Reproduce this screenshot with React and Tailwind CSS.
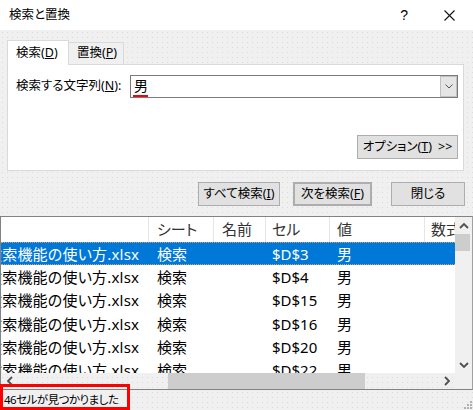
import React from 'react';

const font = "font-['Segoe_UI','Noto_Sans','Noto_Sans_CJK_JP',sans-serif] [font-feature-settings:'palt']";

const rows = [
  { cell: '$D$3', selected: true },
  { cell: '$D$4' },
  { cell: '$D$15' },
  { cell: '$D$16' },
  { cell: '$D$20' },
  { cell: '$D$22' },
];

const grid = 'grid grid-cols-[147px_65px_52px_64px_95px_1fr]';

const Chevron = ({ dir, className }) => {
  const pts = {
    up: '1,6 5,2 9,6',
    down: '1,2 5,6 9,2',
    left: '6,1 2,5 6,9',
    right: '2,1 6,5 2,9',
  }[dir];
  const vertical = dir === 'up' || dir === 'down';
  return (
    <svg
      className={className}
      width={vertical ? 10 : 8}
      height={vertical ? 8 : 10}
      viewBox={vertical ? '0 0 10 8' : '0 0 8 10'}
      fill="none"
      stroke="#505050"
      strokeWidth="1.8"
    >
      <polyline points={pts} />
    </svg>
  );
};

const Button = ({ children, className = '' }) => (
  <div className={`h-[24px] flex items-center justify-center bg-[#e1e1e1] border border-[#adadad] text-[12.5px] ${className}`}>
    {children}
  </div>
);

const App = () => {
  return (
    <div
      className={`relative w-[473px] h-[410px] overflow-hidden bg-[#f0f0f0] bg-[radial-gradient(circle,#dcdcdc_0.6px,transparent_0.9px)] bg-[length:5px_5px] text-black flex flex-col ${font}`}
    >
      {/* title bar */}
      <div className="h-[30px] shrink-0 bg-white flex items-center pl-[9px] text-[12.5px]">
        <span>検索と置換</span>
        <span className="ml-auto mr-[36px] text-[14px] font-['Liberation_Sans',sans-serif]">?</span>
        <svg className="mr-[18px]" width="11" height="11" viewBox="0 0 11 11" stroke="#111" strokeWidth="1.1">
          <line x1="0.5" y1="0.5" x2="10.5" y2="10.5" />
          <line x1="10.5" y1="0.5" x2="0.5" y2="10.5" />
        </svg>
      </div>

      {/* find panel */}
      <div className="px-[7px] pt-[9px] shrink-0">
        <div className="flex items-end h-[25px] text-[12.5px]">
          <div className="relative z-10 w-[62px] h-[25px] -mb-px bg-white border border-b-0 border-[#d9d9d9] pl-[8px] pt-[3px]">
            検索(<span className="underline">D</span>)
          </div>
          <div className="w-[55px] h-[22px] bg-[#f0f0f0] border border-l-0 border-b-0 border-[#d9d9d9] pl-[8px] pt-[1px]">
            置換(<span className="underline">P</span>)
          </div>
        </div>
        <div className="w-[457px] h-[107px] bg-white border border-[#d9d9d9] pt-[10px] pr-[5px] flex flex-col">
          <div className="flex items-center">
            <span className="pl-[8px] text-[12.5px]">
              検索する文字列(<span className="underline">N</span>):
            </span>
            <div className="ml-auto w-[328px] h-[23px] border border-[#7a7a7a] flex items-stretch">
              <div className="flex-1 pl-[3px] flex flex-col">
                <span className="text-[14px] leading-[19px]">男</span>
                <div className="w-[15px] h-[2px] bg-[#ff0000] -ml-[1px]" />
              </div>
              <div className="w-[17px] bg-[#e5e5e5] border border-[#c0c0c0] flex items-center justify-center">
                <svg width="8" height="5" viewBox="0 0 8 5" fill="none" stroke="#555" strokeWidth="1">
                  <polyline points="0.5,0.5 4,4 7.5,0.5" />
                </svg>
              </div>
            </div>
          </div>
          <div className="flex justify-end mt-[37px]">
            <Button className="w-[101px] gap-[6px]">
              <span>オプション(<span className="underline">T</span>)</span>
              <span>&gt;&gt;</span>
            </Button>
          </div>
        </div>
        <div className="flex mt-[11px]">
          <Button className="w-[82px] ml-[191px]">
            すべて検索(<span className="underline">I</span>)
          </Button>
          <Button className="w-[79px] ml-[13px] border-2 border-[#0078d7]">
            次を検索(<span className="underline">F</span>)
          </Button>
          <Button className="w-[74px] ml-[19px]">閉じる</Button>
        </div>
      </div>

      {/* result list */}
      <div className="mt-[10px] h-[174px] shrink-0 border border-[#828282] border-r-[#a0a0a0] flex flex-col">
        <div className="flex h-[156px] bg-white">
          <div className="flex-1 overflow-hidden text-[15px]">
            <div className={`${grid} h-[25px] text-[#333]`}>
              <div />
              <div className="border-l border-[#e5e5e5] pl-[8px] flex items-center">シート</div>
              <div className="border-l border-[#e5e5e5] pl-[8px] flex items-center">名前</div>
              <div className="border-l border-[#e5e5e5] pl-[6px] flex items-center">セル</div>
              <div className="border-l border-[#e5e5e5] pl-[7px] flex items-center">値</div>
              <div className="border-l border-[#e5e5e5] pl-[6px] flex items-center whitespace-nowrap overflow-hidden">数式</div>
            </div>
            {rows.map((r) => (
              <div
                key={r.cell}
                className={`${grid} h-[23.4px] items-center ${
                  r.selected ? 'bg-[#0078d7] text-white border-y border-dotted border-[#d9a066]' : ''
                }`}
              >
                <div className="overflow-hidden whitespace-nowrap">
                  <span className="block -ml-[14px] tracking-[0.2px]">検索機能の使い方.xlsx</span>
                </div>
                <div className="pl-[9px]">検索</div>
                <div />
                <div className="pl-[7px]">{r.cell}</div>
                <div className="pl-[8px]">男</div>
                <div />
              </div>
            ))}
          </div>
          <div className="w-[17px] bg-[#f0f0f0] flex flex-col">
            <div className="h-[17px] flex items-center justify-center">
              <Chevron dir="up" />
            </div>
            <div className="h-[17px] w-[15px] bg-[#cdcdcd]" />
            <div className="flex-1" />
            <div className="h-[17px] flex items-center justify-center">
              <Chevron dir="down" />
            </div>
          </div>
        </div>
        <div className="h-[16px] flex">
          <div className="w-[17px] flex items-center justify-center">
            <Chevron dir="left" />
          </div>
          <div className="w-[150px]" />
          <div className="w-[197px] bg-[#cdcdcd]" />
          <div className="flex-1" />
          <div className="w-[17px] flex items-center justify-center">
            <Chevron dir="right" />
          </div>
          <div className="w-[17px] bg-[#f0f0f0]" />
        </div>
      </div>

      {/* status bar */}
      <div className="flex-1 flex items-center">
        <div className="h-full w-[129px] bg-[#f0f0f0] flex items-center pl-[4px] text-[11.5px] tracking-[-0.5px]">
          46セルが見つかりました
        </div>
        <svg className="ml-auto mr-[1px] self-end mb-[1px]" width="8" height="8" viewBox="0 0 8 8" fill="#b0b0b0">
          <rect x="6" y="0" width="2" height="2" />
          <rect x="3" y="3" width="2" height="2" />
          <rect x="6" y="3" width="2" height="2" />
          <rect x="0" y="6" width="2" height="2" />
          <rect x="3" y="6" width="2" height="2" />
          <rect x="6" y="6" width="2" height="2" />
        </svg>
      </div>
      <div className="absolute left-0 bottom-0 w-[130px] h-[26px] border-[3px] border-[#ff0000]" />
    </div>
  );
};

export default App;
